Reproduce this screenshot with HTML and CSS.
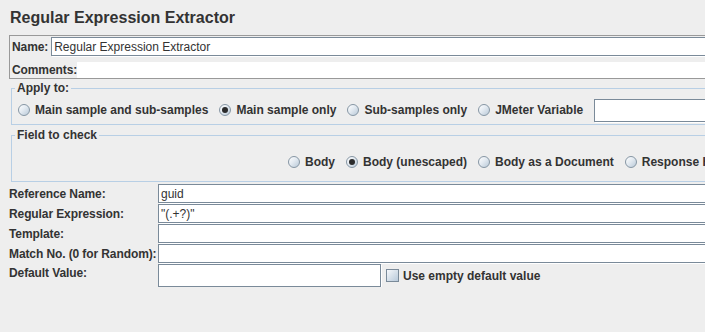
FILE: index.html
```html
<!DOCTYPE html>
<html lang="en">
<head>
    <meta charset="UTF-8">
    <meta name="viewport" content="width=device-width, initial-scale=1.0">
    <title>Regular Expression Extractor</title>
    <link rel="stylesheet" href="styles.css">
</head>
<body>
    <div class="page">
        <h1 class="title">Regular Expression Extractor</h1>

        <div class="name-panel">
            <div class="name-row">
                <label for="name">Name:</label>
                <input type="text" id="name" class="field" value="Regular Expression Extractor">
            </div>
            <div class="comments-row">
                <label>Comments:</label>
                <div class="comments"></div>
            </div>
        </div>

        <fieldset class="group apply">
            <legend>Apply to:</legend>
            <div class="options">
                <span class="opt"><span class="radio"></span>Main sample and sub-samples</span>
                <span class="opt"><span class="radio on"></span>Main sample only</span>
                <span class="opt"><span class="radio"></span>Sub-samples only</span>
                <span class="opt"><span class="radio"></span>JMeter Variable</span>
                <input type="text" class="field var-field">
            </div>
        </fieldset>

        <fieldset class="group check-field">
            <legend>Field to check</legend>
            <div class="options">
                <span class="opt"><span class="radio"></span>Body</span>
                <span class="opt"><span class="radio on"></span>Body (unescaped)</span>
                <span class="opt"><span class="radio"></span>Body as a Document</span>
                <span class="opt"><span class="radio"></span>Response Headers</span>
            </div>
        </fieldset>

        <div class="form">
            <label>Reference Name:</label>
            <input type="text" class="field" value="guid">
            <label>Regular Expression:</label>
            <input type="text" class="field" value="&quot;(.+?)&quot;">
            <label>Template:</label>
            <input type="text" class="field">
            <label>Match No. (0 for Random):</label>
            <input type="text" class="field">
            <label class="top">Default Value:</label>
            <div class="default-row">
                <input type="text" class="field default-field">
                <span class="check"></span>
                <span class="check-label">Use empty default value</span>
            </div>
        </div>
    </div>
</body>
</html>
```

FILE: styles.css
```css
* {
    box-sizing: border-box;
    margin: 0;
    padding: 0;
}

body {
    font-family: "Liberation Sans", Arial, sans-serif;
    font-size: 12px;
    line-height: 14px;
    color: #333;
    background-color: #eee;
    overflow: hidden;
}

.page {
    width: 800px;
}

.title {
    font-size: 16px;
    font-weight: bold;
    line-height: 20px;
    padding: 8px 0 7px 10px;
}

label,
.opt,
.check-label,
legend {
    font-weight: bold;
    white-space: nowrap;
}

label {
    letter-spacing: -0.1px;
}

.field {
    display: block;
    font: inherit;
    color: #333;
    height: 19px;
    padding: 0 2px;
    background: #fff;
    border: 1px solid #7a8a99;
    box-shadow: 1px 1px 0 #fff;
    outline: none;
}

/* name / comments block */
.name-panel {
    margin-left: 9px;
    border: 1px solid #999;
    padding-left: 2px;
}

.name-row {
    display: flex;
    align-items: center;
    gap: 3px;
    margin-top: 1px;
}

.name-row .field {
    flex: 1;
}

.comments-row {
    display: flex;
    align-items: center;
    height: 16px;
    margin-top: 6px;
}

.comments {
    flex: 1;
    height: 16px;
    background: #fff;
}

/* titled groups */
.group {
    margin-left: 11px;
    border: 1px solid #b8cfe5;
    min-inline-size: 0;
}

.group legend {
    margin-left: 3px;
    padding: 0 2px;
    line-height: 14px;
}

.apply {
    margin-top: 2px;
}

.apply .options {
    height: 24px;
    margin: 3px 0 2px;
    padding-left: 6px;
}

.check-field {
    margin-top: 3px;
}

.check-field .options {
    height: 16px;
    margin: 12px 0 11px;
    padding-left: 276px;
}

.options {
    display: flex;
    align-items: center;
    gap: 11px;
    white-space: nowrap;
}

.opt {
    display: flex;
    align-items: center;
    gap: 5px;
}

.var-field {
    width: 200px;
    height: 23px;
}

.radio {
    position: relative;
    flex: none;
    width: 12px;
    height: 12px;
    border: 1px solid #8696a4;
    border-radius: 50%;
    background: linear-gradient(135deg, #fff 0%, #e3eaf1 45%, #b9c9d8 100%);
}

.radio.on::after {
    content: "";
    position: absolute;
    left: 2px;
    top: 2px;
    width: 6px;
    height: 6px;
    border-radius: 50%;
    background: #2b2b2b;
}

/* lower form */
.form {
    display: grid;
    grid-template-columns: 149px 1fr;
    row-gap: 1px;
    align-items: center;
    margin: 2px 0 0 9px;
}

.form .top {
    align-self: start;
    padding-top: 2px;
}

.default-row {
    display: flex;
    align-items: center;
}

.default-field {
    width: 223px;
    height: 23px;
}

.check {
    width: 13px;
    height: 13px;
    margin-left: 5px;
    border: 1px solid #7a8a99;
    background: linear-gradient(135deg, #f6f8fb 0%, #d6e0ea 50%, #b8c9da 100%);
}

.check-label {
    margin-left: 4px;
}
```
